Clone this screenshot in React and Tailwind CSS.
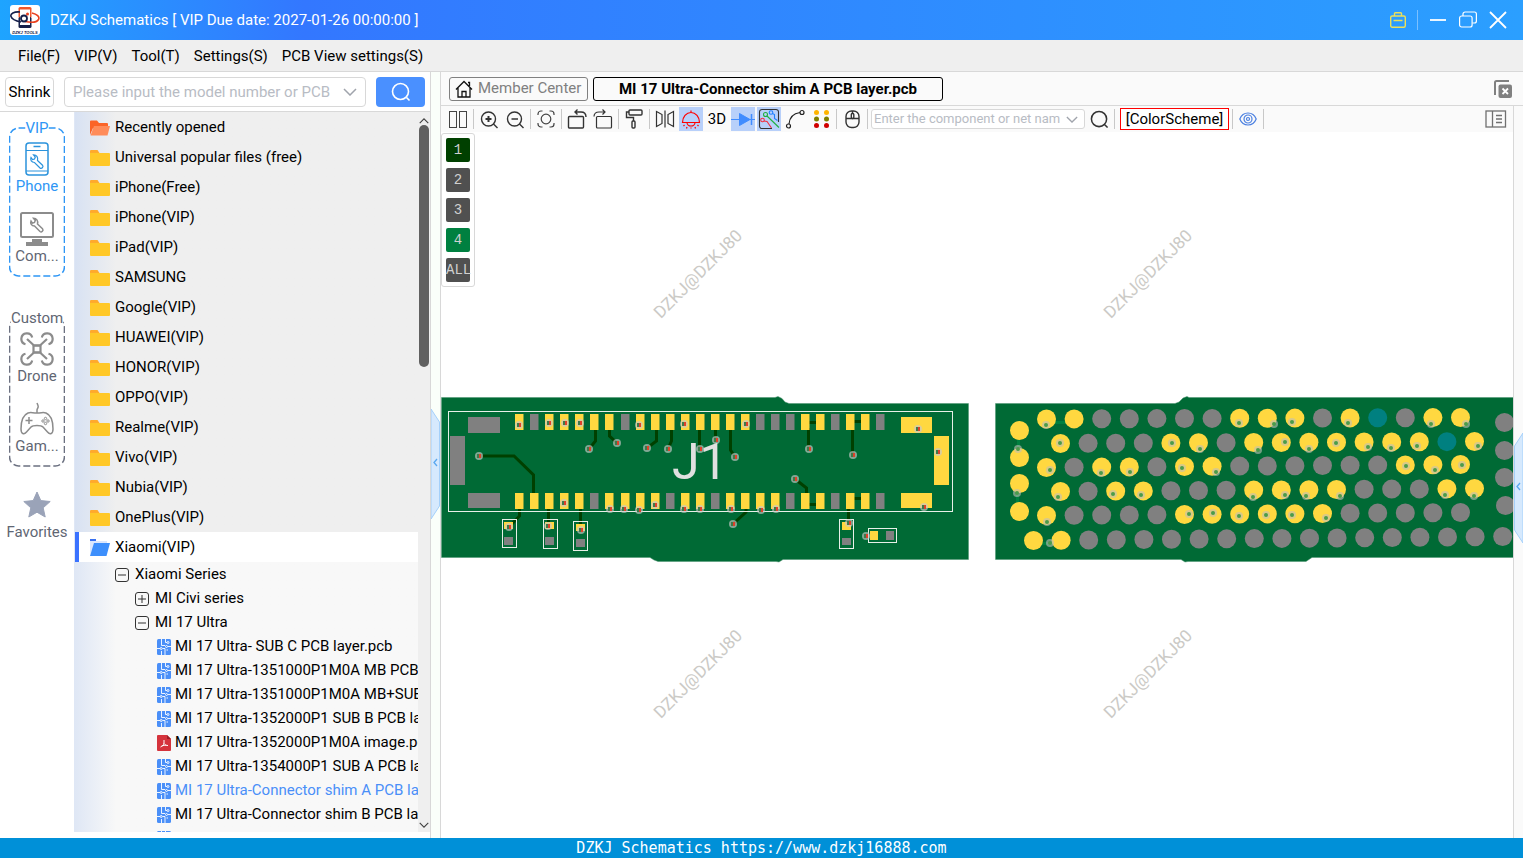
const menus = ['File(F)', 'VIP(V)', 'Tool(T)', 'Settings(S)', 'PCB View settings(S)']

const folders = [
  'Universal popular files (free)',
  'iPhone(Free)',
  'iPhone(VIP)',
  'iPad(VIP)',
  'SAMSUNG',
  'Google(VIP)',
  'HUAWEI(VIP)',
  'HONOR(VIP)',
  'OPPO(VIP)',
  'Realme(VIP)',
  'Vivo(VIP)',
  'Nubia(VIP)',
  'OnePlus(VIP)',
]

const files = [
  { name: 'MI 17 Ultra- SUB C PCB layer.pcb' },
  { name: 'MI 17 Ultra-1351000P1M0A MB PCB layer.pcb' },
  { name: 'MI 17 Ultra-1351000P1M0A MB+SUB PCB layer.pcb' },
  { name: 'MI 17 Ultra-1352000P1 SUB B PCB layer.pcb' },
  { name: 'MI 17 Ultra-1352000P1M0A image.pdf', pdf: true },
  { name: 'MI 17 Ultra-1354000P1 SUB A PCB layer.pcb' },
  { name: 'MI 17 Ultra-Connector shim A PCB layer.pcb', active: true },
  { name: 'MI 17 Ultra-Connector shim B PCB layer.pcb' },
  { name: 'MI 17 Ultra-Connector shim C PCB layer.pcb' },
]

const layers = [
  { label: '1', color: 'bg-[#004000]' },
  { label: '2', color: 'bg-[#505050]' },
  { label: '3', color: 'bg-[#505050]' },
  { label: '4', color: 'bg-[#008040]' },
  { label: 'ALL', color: 'bg-[#505050]' },
]

const YELLOW = '#ffd840'
const GREY = '#808080'
const TEAL = '#008080'
const BOARD = '#006a35'
const fills = { Y: YELLOW, G: GREY, T: TEAL }

/* ---------- board A: the connector ---------- */

const pinX = [75, 90, 105, 120, 135, 150, 165, 181, 196, 211, 226, 241, 256, 271, 286, 301, 316, 331, 346, 361, 376, 391, 406, 421, 436]
const topPins = 'YGYYYYYGYYYYYYYYGGGYYGYYG'
const bottomPins = 'YYYYYGYYYYGYYGYYYYGYYGYYG'

// x, y, width, height, colour
const pads = [
  [28, 27, 32, 16, 'G'], [10, 46, 15, 49, 'G'], [28, 103, 32, 15, 'G'],
  [461, 27, 31, 16, 'Y'], [494, 46, 15, 49, 'Y'], [461, 103, 31, 15, 'Y'],
  [64, 132, 9, 7, 'Y'], [64, 147, 9, 8, 'G'],
  [105, 132, 9, 7, 'Y'], [105, 147, 9, 8, 'G'],
  [136, 134, 9, 7, 'Y'], [136, 149, 9, 8, 'G'],
  [402, 132, 9, 8, 'Y'], [402, 148, 9, 7, 'G'],
  [430, 141, 8, 9, 'Y'], [446, 141, 8, 9, 'G'],
]

const outlines = [
  [8.5, 21.5, 504, 100], [62.5, 129.5, 14, 28], [103.5, 129.5, 14, 29],
  [133.5, 131.5, 14, 29], [399.5, 129.5, 14, 29], [428.5, 138.5, 28, 14],
]

const traces = [
  '39,66 74,66 93.5,85 93.5,105', '155.5,38 155.5,51 149,59', '169.5,38 169.5,46 177,53',
  '216.5,38 216.5,51 207,58', '231.5,38 231.5,51 228,59', '259.5,38 259.5,59', '275.5,38 275.5,50',
  '290.5,38 290.5,60 295,67', '368.5,38 368.5,59', '367,32.5 380,32.5', '412.5,38 412.5,65',
  '412,31.5 424,31.5', '355,89 366.5,98 366.5,105', '367,114.5 380,114.5', '412,108.5 424,108.5',
  '79.5,117 79.5,126 69,137', '108.5,117 108.5,136', '140.5,117 140.5,140', '306,117 306,122 293,134',
  '408.5,117 408.5,133',
]

const viasA = [
  [79, 35], [109, 33], [125, 33], [140, 33], [149, 59], [177, 53], [199, 35], [207, 58], [228, 59],
  [244, 34], [260, 59], [276, 50], [39, 66], [124, 113], [170, 119], [184, 119], [199, 120], [215, 115],
  [244, 119], [260, 119], [69, 137], [108, 136], [141, 140], [306, 34], [295, 67], [369, 59], [413, 65],
  [355, 89], [291, 119], [321, 120], [336, 119], [293, 134], [478, 39], [498, 62], [484, 117], [409, 133],
  [426, 146],
]

/* ---------- board B: the ball grid ---------- */

// first x, y at the left end, y at the right end, colours
const ballRows = [
  { x: 66.5, y1: 29, y2: 27.5, balls: 'YYGGGGGYYYGYTGYY' },
  { x: 80.5, y1: 53.5, y2: 51.5, balls: 'YGGGYYGYYYYYYYTY' },
  { x: 66.5, y1: 77.5, y2: 74.5, balls: 'YGYYGYYGGGGGGYYY' },
  { x: 80.5, y1: 101.5, y2: 98.5, balls: 'YGYYGGGYYYYGGGYY' },
  { x: 66.5, y1: 125.5, y2: 122.5, balls: 'YGGGGYYYYYYGGGGG' },
  { x: 53.5, y1: 150.5, y2: 146.5, balls: 'YYGGGGGGGGGGGGGGGG' },
]

const sideBalls = [
  [39.5, 40.5, 'Y'], [39.5, 67.5, 'Y'], [39.5, 93.5, 'Y'], [39.5, 121.5, 'Y'],
  [524.5, 32.5, 'G'], [524.5, 60.5, 'G'], [524.5, 87.5, 'G'], [525.5, 115.5, 'G'],
]

const viasB = [
  [66, 35], [80, 53], [38, 59], [70, 80], [121, 83], [150, 82], [192, 53], [220, 59], [202, 78], [236, 82],
  [259, 33], [278, 60], [37, 103], [78, 107], [133, 104], [161, 105], [273, 107], [67, 132], [209, 124],
  [233, 123], [259, 126], [70, 153], [294, 34], [312, 32], [368, 33], [451, 34], [486, 34], [305, 52],
  [329, 59], [356, 53], [388, 57], [411, 58], [437, 56], [498, 56], [426, 76], [455, 80], [482, 75],
  [305, 105], [326, 106], [360, 106], [465, 105], [494, 106], [286, 125], [312, 125], [346, 128],
]

function ViaA({ x, y }) {
  return (
    <g transform={`translate(${x} ${y})`}>
      <circle r="4" fill="#c8c8c8" fillOpacity="0.65" />
      <rect x="-2" y="-2" width="2" height="4" fill="#3f7a4a" />
      <rect x="0" y="-2" width="2" height="4" fill="#e0402a" />
    </g>
  )
}

function ViaB({ x, y }) {
  return (
    <g>
      <circle cx={x} cy={y} r="4" fill="#c0c0b8" fillOpacity="0.6" />
      <circle cx={x} cy={y} r="2" fill="#4b9b4b" />
    </g>
  )
}

function Boards() {
  return (
    <svg className="block w-full h-full" role="img" aria-label="PCB layer view">
      <g fill="#cbcac6" fontFamily="Roboto, sans-serif" fontSize="17" textAnchor="middle">
        <text transform="translate(261 146) rotate(-45)">DZKJ@DZKJ80</text>
        <text transform="translate(711 146) rotate(-45)">DZKJ@DZKJ80</text>
        <text transform="translate(261 546) rotate(-45)">DZKJ@DZKJ80</text>
        <text transform="translate(711 546) rotate(-45)">DZKJ@DZKJ80</text>
      </g>

      <g transform="translate(-1 258)">
        <path
          d="M1.500 7.500H335L338 6.500L342 8.500L345 12L349 13.500H528.500V169.500H343L339 172L336 171.500H218L214 170L210 167.500H1.500Z"
          fill={BOARD}
          stroke="#4c9570"
          strokeWidth="0.5"
        />
        {traces.map((t) => (
          <polyline key={t} points={t} fill="none" stroke="#004000" strokeWidth="3" />
        ))}
        {pinX.map((x, i) => (
          <g key={x}>
            <rect x={x} y="24" width="8.500" height="16" fill={fills[topPins[i]]} />
            <rect x={x} y="103" width="8.500" height="16" fill={fills[bottomPins[i]]} />
          </g>
        ))}
        {pads.map(([x, y, w, h, c]) => (
          <rect key={`${x}-${y}`} x={x} y={y} width={w} height={h} fill={fills[c]} />
        ))}
        {outlines.map(([x, y, w, h]) => (
          <rect key={`${x}-${y}`} x={x} y={y} width={w} height={h} fill="none" stroke="#e8f0e8" />
        ))}
        {viasA.map(([x, y]) => (
          <ViaA key={`${x}-${y}`} x={x} y={y} />
        ))}
        <text x="232" y="89" fontSize="50" fontFamily="Roboto, sans-serif" fill="#e0e0e0">
          J1
        </text>
      </g>

      <g transform="translate(539 258)">
        <path
          d="M15.5 13.500H195L199 12L203 8L207 6.500L209 7.500H560V167.500H332L326 171.500H208L205 172L201 169.500H15.500Z"
          fill={BOARD}
          stroke="#4c9570"
          strokeWidth="0.5"
        />
        <path d="M66 32.500H94M38.500 48V60M37.500 103V116M54 153.500H75" stroke="#008040" strokeWidth="3" />
        {ballRows.map((row) =>
          [...row.balls].map((b, i) => (
            <circle
              key={`${row.y1}-${i}`}
              cx={row.x + i * 27.6}
              cy={row.y1 + ((row.y2 - row.y1) * i) / (row.balls.length - 1)}
              r="9.500"
              fill={fills[b]}
            />
          ))
        )}
        {sideBalls.map(([x, y, c]) => (
          <circle key={`${x}-${y}`} cx={x} cy={y} r="9.500" fill={fills[c]} />
        ))}
        {viasB.map(([x, y]) => (
          <ViaB key={`${x}-${y}`} x={x} y={y} />
        ))}
      </g>
    </svg>
  )
}

/* ---------- icons ---------- */

function Logo() {
  return (
    <svg viewBox="0 0 30 30" className="w-[30px] h-[30px] shrink-0">
      <rect width="30" height="30" rx="3" fill="#fff" />
      <rect x="8.500" y="2" width="13" height="11" rx="1.500" fill="#f0562c" />
      <rect x="8.500" y="12" width="13" height="11" rx="1.500" fill="#16204a" />
      <rect x="10" y="4.500" width="10" height="15.500" fill="#fff" />
      <path d="M22 8c5 1 8 4 6.500 6.500S22 18 15 16.500" fill="none" stroke="#e8401f" strokeWidth="1.600" />
      <path d="M10 7C4 6.500 0 8.500 1 11.500c.8 2.500 5 4.500 10 5.500" fill="none" stroke="#16204a" strokeWidth="1.600" />
      <circle cx="14" cy="13.500" r="3" fill="none" stroke="#16204a" strokeWidth="1.800" />
      <circle cx="17.500" cy="9" r="1.500" fill="#e8401f" />
      <text x="15" y="28.500" fontSize="4" fontWeight="700" fontStyle="italic" textAnchor="middle" fontFamily="'Liberation Sans', sans-serif" fill="#16204a">
        DZKJ TOOLS
      </text>
    </svg>
  )
}

function Folder({ open }) {
  if (open === 'orange') {
    return (
      <svg viewBox="0 0 20 16" className="w-5 h-4 shrink-0">
        <path d="M0 15V1.500A1 1 0 0 1 1 .5h6l2 2.500h8a1 1 0 0 1 1 1V8H3Z" fill="#fb6428" />
        <path d="M4 6h16l-2.500 9.500H.5Z" fill="#ff8c5a" />
      </svg>
    )
  }
  if (open === 'blue') {
    return (
      <svg viewBox="0 0 20 17" className="w-5 h-[17px] shrink-0">
        <path d="M0 0h6v2H0Z" fill="#3870f0" />
        <path d="M0 16V2h17v4L4 8Z" fill="#dbe7fd" />
        <path d="M4 4h16l-3.500 13H0Z" fill="#3d8ffc" />
      </svg>
    )
  }
  return (
    <svg viewBox="0 0 20 16" className="w-5 h-4 shrink-0">
      <path d="M0 6V1a1 1 0 0 1 1-1h6.500l2 3v3Z" fill="#ffaa2c" />
      <path d="M0 3h19a1 1 0 0 1 1 1v11a1 1 0 0 1-1 1H1a1 1 0 0 1-1-1Z" fill="#ffc828" />
    </svg>
  )
}

function Toggle({ plus }) {
  return (
    <svg viewBox="0 0 14 14" className="w-3.5 h-3.5 shrink-0" fill="none" stroke="#333">
      <rect x="0.500" y="0.500" width="13" height="13" rx="2.500" />
      <path d={plus ? 'M3 7h8M7 3v8' : 'M3 7h8'} />
    </svg>
  )
}

function PcbFile() {
  return (
    <svg viewBox="0 0 14 16" className="w-3.5 h-4 shrink-0">
      <rect width="14" height="16" rx="1.500" fill="#4a8ff8" />
      <g fill="none" stroke="#fff" strokeWidth="0.900">
        <path d="M4.500 0v6.500h3.500M8.500 0v3.500h1.500M0 9.500h3M5.500 9.500H8V16M4.500 12v4M14 7.500h-3M9.500 11H11" />
        <circle cx="11" cy="3.500" r="1" />
        <circle cx="4.200" cy="9.500" r="1" />
        <circle cx="9.500" cy="7.500" r="1" />
      </g>
    </svg>
  )
}

function PdfFile() {
  return (
    <svg viewBox="0 0 14 16" className="w-3.5 h-4 shrink-0">
      <path d="M1 0h9l4 4v11a1 1 0 0 1-1 1H1a1 1 0 0 1-1-1V1a1 1 0 0 1 1-1Z" fill="#d5333c" />
      <path d="M10 0l4 4h-4Z" fill="#9c1d26" />
      <path d="M7 5v3c0 2-2 3.500-3.500 4M7 8.500c1 1.500 2.500 2 4 2M4.500 11c2-.8 3.500-.8 5-.5" fill="none" stroke="#fff" />
    </svg>
  )
}

function Magnifier({ className }) {
  return (
    <svg viewBox="0 0 20 20" className={className} fill="none" stroke="currentColor" strokeWidth="1.600">
      <circle cx="9.500" cy="9.500" r="8" />
      <path d="M15.500 15.500l3 3" />
    </svg>
  )
}

function Chevron({ className, d = 'M1 1l6 6 6-6' }) {
  return (
    <svg viewBox="0 0 14 8" className={className} fill="none" stroke="currentColor" strokeWidth="1.500">
      <path d={d} />
    </svg>
  )
}

const wrench =
  'M1.500 3.500C.5 6 2 8.500 5 8.500L10.500 14c1.500 1.200 4-.8 2.500-2.800L8 6.500C8.800 3 7 .8 4 .8L5.800 3 5 5l-2 .6Z'

function PhoneIcon() {
  return (
    <svg viewBox="0 0 24 34" className="w-6 h-[34px]" fill="none" stroke="#2b93dc" strokeWidth="1.500">
      <rect x="1" y="1" width="22" height="32" rx="3" />
      <path d="M8.500 4.500h7" />
      <path d="M1 8.500h22M1 29h22" strokeWidth="1" />
      <path d={wrench} transform="translate(4.500 12)" strokeWidth="1.200" />
    </svg>
  )
}

function ComputerIcon() {
  return (
    <svg viewBox="0 0 34 34" className="w-[34px] h-[34px]" fill="none" stroke="#8c8c8c">
      <rect x="1" y="1" width="32" height="24" rx="1.500" strokeWidth="2" />
      <path d="M12 27h10v3h6v4H6v-4h6Z" fill="#8c8c8c" stroke="none" />
      <path d={wrench} transform="translate(9.500 5.500)" strokeWidth="1.500" />
    </svg>
  )
}

function DroneIcon() {
  return (
    <svg viewBox="0 0 34 34" className="w-[34px] h-[34px]" fill="none" stroke="#8c8c8c" strokeWidth="2.200">
      <path d="M5.500 12.200A5.500 5.500 0 1 1 12.200 5.500M21.800 5.500A5.500 5.500 0 1 1 28.500 12.200M5.500 21.800A5.500 5.500 0 1 0 12.200 28.500M21.800 28.500A5.500 5.500 0 1 0 28.500 21.800" />
      <path d="M7 7l7 6.500h6L27 7M7 27l7-6.500h6L27 27" />
      <rect x="13.500" y="13.500" width="7" height="7" />
    </svg>
  )
}

function GamepadIcon() {
  return (
    <svg viewBox="0 0 34 34" className="w-[34px] h-[34px]" fill="none" stroke="#8c8c8c" strokeWidth="1.500">
      <path d="M17 11V8c0-2 2-2 1-4.500L17 1" />
      <path d="M8 11c3-1 4 0 9 0s6-1 9 0c5 2 7 9 7 16 0 5-3 6-5.500 3L23 25c-1-1-2-1.500-6-1.500S12 24 11 25l-4.500 5C4 33 1 32 1 27c0-7 2-14 7-16Z" />
      <path d="M5.500 18.500h7M9 15v7" />
      <g strokeWidth="1">
        <circle cx="25.500" cy="16.500" r="1.200" />
        <circle cx="25.500" cy="21.500" r="1.200" />
        <circle cx="23" cy="19" r="1.200" />
        <circle cx="28" cy="19" r="1.200" />
      </g>
    </svg>
  )
}

const toolSvg = 'w-6 h-6'

const toolIcons = {
  split: (
    <svg viewBox="0 0 24 24" className={toolSvg} fill="none" stroke="#444">
      <rect x="3.500" y="4.500" width="7" height="16" />
      <rect x="13.500" y="4.500" width="7" height="16" />
    </svg>
  ),
  zoomIn: (
    <svg viewBox="0 0 24 24" className={toolSvg} fill="none" stroke="#333" strokeWidth="1.400">
      <circle cx="11.500" cy="12" r="7" />
      <path d="M16.500 17l4 4" />
      <path d="M8.500 12h6M11.500 9v6" strokeWidth="2" />
    </svg>
  ),
  zoomOut: (
    <svg viewBox="0 0 24 24" className={toolSvg} fill="none" stroke="#333" strokeWidth="1.400">
      <circle cx="11.500" cy="12" r="7" />
      <path d="M16.500 17l4 4M8.500 12H15" />
    </svg>
  ),
  fit: (
    <svg viewBox="0 0 24 24" className={toolSvg} fill="none" stroke="#444" strokeWidth="1.200">
      <circle cx="12" cy="12" r="4.800" />
      <path d="M4 8V7a3 3 0 0 1 3-3h1.500M15.500 4H17a3 3 0 0 1 3 3v1M20 16v1a3 3 0 0 1-3 3h-1.500M8.500 20H7a3 3 0 0 1-3-3v-1" />
    </svg>
  ),
  rotateLeft: (
    <svg viewBox="0 0 24 24" className={toolSvg} fill="none" stroke="#333" strokeWidth="1.400">
      <rect x="3.500" y="9.500" width="15" height="11.500" rx="1" />
      <path d="M21 10c0-3-2-5-5-5H10M12.500 2.500L10 5l2.500 2.500" />
    </svg>
  ),
  rotateRight: (
    <svg viewBox="0 0 24 24" className={toolSvg} fill="none" stroke="#333" strokeWidth="1.200">
      <rect x="5.500" y="9.500" width="15" height="11.500" rx="1" />
      <path d="M3 9.500C3 6.500 5 5 8 5h6M11.500 2.500L14 5l-2.500 2.500" />
    </svg>
  ),
  roller: (
    <svg viewBox="0 0 24 24" className={toolSvg} fill="none" stroke="#333" strokeWidth="1.400">
      <rect x="7" y="3" width="13" height="5" rx="1" />
      <path d="M7 5H4.500v5.500h7V14" />
      <rect x="10" y="14" width="3" height="7" rx="1" />
    </svg>
  ),
  mirror: (
    <svg viewBox="0 0 24 24" className={toolSvg} fill="none" stroke="#333" strokeWidth="1.200">
      <path d="M3.500 4.500L9 7.500v9l-5.500 3ZM12 3.500v17M20.500 4.500L15 7.500v9l5.500 3Z" />
    </svg>
  ),
  lamp: (
    <svg viewBox="0 0 24 24" className={toolSvg} fill="none" stroke="#f00" strokeWidth="1.200">
      <path d="M12 3.500v1.500M3.500 15.500a8.500 10 0 0 1 17 0ZM8 15.500a4 3.500 0 0 0 8 0M5.500 18l-1 1M8 20l-.5 1.500M12 20.500v1M16 20l.5 1.500M18.500 18l1 1" />
    </svg>
  ),
  diode: (
    <svg viewBox="0 0 24 24" className={toolSvg} stroke="#408cff" fill="#408cff">
      <path d="M0 12.500h24" />
      <path d="M8.500 6.500v12l10.500-6Z" />
      <path d="M20.500 7v11" strokeWidth="1.500" />
    </svg>
  ),
  nets: (
    <svg viewBox="0 0 24 24" className={toolSvg} fill="none" strokeWidth="1.100">
      <path d="M15 21.500H5A2.500 2.500 0 0 1 2.500 19V5A2.500 2.500 0 0 1 5 2.500h14A2.500 2.500 0 0 1 21.500 5v10" stroke="#333" />
      <circle cx="8.500" cy="7.500" r="2" stroke="#20b040" />
      <path d="M10 9l12 11.500" stroke="#20b040" />
      <circle cx="14" cy="5.500" r="1.800" stroke="#2080ff" />
      <path d="M15.500 6.500l2 1v4l3 2" stroke="#2080ff" />
      <circle cx="5.500" cy="13" r="1.800" stroke="#f03040" />
      <path d="M7 14l3 .5 4.500 6.500" stroke="#f03040" />
    </svg>
  ),
  arc: (
    <svg viewBox="0 0 24 24" className={toolSvg} fill="none" stroke="#222" strokeWidth="1.200">
      <circle cx="5.500" cy="19" r="2" />
      <circle cx="19" cy="5.500" r="2" />
      <path d="M6 17C6.500 11 9.500 6.500 17 5.500" />
    </svg>
  ),
  dots: (
    <svg viewBox="0 0 24 24" className={toolSvg}>
      <g fill="#ffb400"><circle cx="7.500" cy="5.500" r="2.500" /><circle cx="17.500" cy="5.500" r="2.500" /></g>
      <g fill="#808000"><circle cx="7.500" cy="12" r="2.500" /><circle cx="17.500" cy="12" r="2.500" /></g>
      <g fill="#d00000"><circle cx="7.500" cy="18.500" r="2.500" /><circle cx="17.500" cy="18.500" r="2.500" /></g>
    </svg>
  ),
  mouse: (
    <svg viewBox="0 0 24 24" className={toolSvg} fill="none" stroke="#333" strokeWidth="1.400">
      <rect x="6" y="4" width="13" height="16.500" rx="5.500" />
      <path d="M6 11.500h13M12.500 4v3" />
      <rect x="11.300" y="6.500" width="2.500" height="5" rx="1" />
    </svg>
  ),
}

const tools = [
  ['split', 'Split view'], ['|'], ['zoomIn', 'Zoom in'], ['zoomOut', 'Zoom out'], ['|'], ['fit', 'Fit'], ['|'],
  ['rotateLeft', 'Rotate left'], ['rotateRight', 'Rotate right'], ['|'], ['roller', 'Paint'], ['|'],
  ['mirror', 'Mirror'], ['lamp', 'Light', true], ['3D', '3D'], ['diode', 'Diode', true], ['nets', 'Nets', true],
  ['arc', 'Measure'], ['dots', 'Points'], ['|'], ['mouse', 'Mouse'], ['|'],
]

function Separator() {
  return <span className="w-px h-5 mx-px shrink-0 bg-[#c8c8c8]" />
}

/* ---------- layout ---------- */

function TitleBar() {
  return (
    <header className="h-10 shrink-0 flex items-center pl-2.5 pr-4 text-white bg-linear-to-r from-[#1ea4ff] via-[#3377ff] via-20% to-[#2b9fff]">
      <Logo />
      <h1 className="ml-2.5">DZKJ Schematics [ VIP Due date: 2027-01-26 00:00:00 ]</h1>
      <div className="ml-auto flex items-center">
        <button aria-label="Toolbox">
          <svg viewBox="0 0 16 16" className="w-4 h-4" fill="none" stroke="#ece05a" strokeWidth="1.400">
            <rect x="0.700" y="4" width="14.600" height="11.300" rx="1.500" />
            <path d="M4.500 4V1.500A.8.800 0 0 1 5.300.7h5.400a.8.800 0 0 1 .8.800V4M3.500 8.500h9" />
          </svg>
        </button>
        <span className="w-px h-5 ml-[11px] mr-[11px] bg-[#7cc0ff]" />
        <button aria-label="Minimize">
          <svg viewBox="0 0 18 18" className="w-[18px] h-[18px]" stroke="#fff" strokeWidth="1.800"><path d="M1 9h16" /></svg>
        </button>
        <button aria-label="Restore" className="ml-3">
          <svg viewBox="0 0 18 18" className="w-[18px] h-[18px]" fill="none" stroke="#fff" strokeWidth="1.200">
            <rect x="0.600" y="5" width="12.500" height="11" rx="2" />
            <path d="M4 5V3a2 2 0 0 1 2-2h9.400a2 2 0 0 1 2 2v7a2 2 0 0 1-2 2h-2" />
          </svg>
        </button>
        <button aria-label="Close" className="ml-3">
          <svg viewBox="0 0 18 18" className="w-[18px] h-[18px]" stroke="#fff" strokeWidth="1.800"><path d="M1 1l16 16M17 1L1 17" /></svg>
        </button>
      </div>
    </header>
  )
}

function NavGroup({ label, color, text, children }) {
  return (
    <section className="relative w-14 h-[150px] pt-3.5">
      <svg className="absolute inset-0 w-full h-full pointer-events-none">
        <rect x="1%" y="0.700%" width="98%" height="98.600%" rx="9" fill="none" stroke={color} strokeWidth="1.500" strokeDasharray="7 3" />
      </svg>
      <h2 className={`absolute -top-2 left-1/2 -translate-x-1/2 bg-white leading-[18px] ${text}`}>{label}</h2>
      {children}
    </section>
  )
}

function NavItem({ icon, label, text = 'text-[#5f6673]' }) {
  return (
    <button className={`relative w-full h-[70px] flex flex-col items-center leading-[18px] ${text}`}>
      <span className="h-9 flex items-center">{icon}</span>
      {label}
    </button>
  )
}

function SideNav() {
  return (
    <nav className="w-[74px] shrink-0 flex flex-col items-center pt-[15px] bg-white">
      <NavGroup label="VIP" color="#2e96f5" text="text-[#2e96f5]">
        <NavItem icon={<PhoneIcon />} label="Phone" text="text-[#2e96f5]" />
        <NavItem icon={<ComputerIcon />} label="Com..." />
      </NavGroup>
      <div className="h-10 shrink-0" />
      <NavGroup label="Custom" color="#6b7080" text="text-[#5f6673]">
        <NavItem icon={<DroneIcon />} label="Drone" />
        <NavItem icon={<GamepadIcon />} label="Gam..." />
      </NavGroup>
      <div className="h-5 shrink-0" />
      <NavItem
        icon={
          <svg viewBox="0 0 28 28" className="w-7 h-7" fill="#9aa3b8">
            <path d="M14 1l3.800 8.600 9.400.9-7 6.300 2 9.200-8.200-4.800L5.800 26l2-9.200-7-6.300 9.400-.9Z" stroke="#9aa3b8" strokeLinejoin="round" />
          </svg>
        }
        label="Favorites"
      />
    </nav>
  )
}

function Tree() {
  return (
    <div className="flex-1 min-w-0 min-h-0 flex flex-col overflow-hidden bg-linear-to-r from-[#d8e2f3] to-[#efefef] to-12%">
      <ul>
        <li className="h-[30px] pt-px pl-[15px] flex items-center gap-[5px]"><Folder open="orange" />Recently opened</li>
        {folders.map((f) => (
          <li key={f} className="h-[30px] pt-px pl-[15px] flex items-center gap-[5px]"><Folder />{f}</li>
        ))}
        <li className="h-[30px] pt-px pl-[11px] flex items-center gap-[5px] bg-white border-l-4 border-[#3a72ff]"><Folder open="blue" />Xiaomi(VIP)</li>
      </ul>
      <ul className="bg-linear-to-r from-[#dfe7f5] to-[#f8f8f8] to-12%">
        <li className="h-6 pt-px pl-10 flex items-center gap-1.5"><Toggle />Xiaomi Series</li>
        <li className="h-6 pt-px pl-[60px] flex items-center gap-1.5"><Toggle plus />MI Civi series</li>
        <li className="h-6 pt-px pl-[60px] flex items-center gap-1.5"><Toggle />MI 17 Ultra</li>
        {files.map((f) => (
          <li key={f.name} className={`h-6 pt-px pl-[82px] flex items-center gap-1 whitespace-nowrap ${f.active ? 'text-[#4a8ff8]' : ''}`}>
            {f.pdf ? <PdfFile /> : <PcbFile />}
            {f.name}
          </li>
        ))}
      </ul>
    </div>
  )
}

function Sidebar() {
  return (
    <aside className="w-[431px] shrink-0 flex flex-col bg-white border-r border-[#d8d8d8]">
      <form className="h-10 shrink-0 flex items-center pl-[5px] pr-[5px] border-b border-[#d8d8d8]">
        <button type="button" className="w-[49px] h-[30px] pt-px border border-[#d8d8d8] rounded-sm">Shrink</button>
        <div className="ml-2.5 flex-1 h-[30px] flex items-center px-2 border border-[#d8d8d8] rounded-sm">
          <input
            aria-label="Model number or PCB"
            placeholder="Please input the model number or PCB"
            className="flex-1 min-w-0 pt-px outline-none placeholder:text-[#b8bcc4]"
          />
          <Chevron className="w-3.5 h-2 ml-1.5 text-[#a0a4ac]" />
        </div>
        <button type="button" aria-label="Search" className="ml-2.5 w-[49px] h-[30px] flex items-center justify-center rounded-sm bg-[#4a90ff] text-white">
          <Magnifier className="w-5 h-5" />
        </button>
      </form>
      <div className="flex-1 min-h-0 flex pb-1.5">
        <SideNav />
        <div className="flex-1 min-w-0 flex border-l border-[#dfe7f5]">
          <Tree />
          <div className="w-3 shrink-0 flex flex-col items-center pt-1.5 pb-1 bg-[#efefef]">
            <Chevron className="w-2.5 h-1.5 text-[#404040]" d="M1 7l6-6 6 6" />
            <div className="mt-px w-2.5 h-[242px] rounded-full bg-[#606060]" />
            <Chevron className="w-2.5 h-1.5 mt-auto text-[#404040]" />
          </div>
        </div>
      </div>
    </aside>
  )
}

function TabBar() {
  return (
    <div className="h-[34px] shrink-0 flex items-center gap-[5px] pl-2 pr-[11px] bg-[#fafafa] border-b border-[#d8d8d8]">
      <button className="h-6 w-[139px] flex items-center gap-[5px] pl-[5px] border border-[#808080] rounded-[3px] text-[#808080] whitespace-nowrap">
        <svg viewBox="0 0 18 18" className="w-[18px] h-[18px] shrink-0" fill="none" stroke="#111" strokeWidth="1.300">
          <path d="M1 9.500L9 1.500l8 8M3 8v9h12V8M7 17v-5.500h4V17M13 2.500h1.500V6" />
        </svg>
        Member Center
      </button>
      <button className="h-6 w-[350px] border border-black rounded-[3px] font-bold leading-5 whitespace-nowrap">
        MI 17 Ultra-Connector shim A PCB layer.pcb
      </button>
      <button aria-label="Close all" className="ml-auto">
        <svg viewBox="0 0 18 18" className="w-[18px] h-[18px]">
          <path d="M1 15V2.500A1.500 1.500 0 0 1 2.500 1H15" fill="none" stroke="#808080" strokeWidth="2" />
          <rect x="4.500" y="4.500" width="13.500" height="13.500" rx="2" fill="#808080" />
          <path d="M8.500 8.500l5.500 5.500M14 8.500L8.500 14" stroke="#fff" strokeWidth="1.800" />
        </svg>
      </button>
    </div>
  )
}

function Toolbar() {
  return (
    <div className="h-[26px] shrink-0 flex items-center gap-0.5 pl-[5px] pr-1.5 bg-[#fafafa]">
      {tools.map(([id, title, active], i) =>
        id === '|' ? (
          <Separator key={i} />
        ) : (
          <button key={i} aria-label={title} className={`w-6 h-6 shrink-0 flex items-center justify-center ${active ? 'bg-[#b8d0fa]' : ''}`}>
            {toolIcons[id] || id}
          </button>
        )
      )}
      <div className="w-[214px] h-5 flex items-center px-0.5 border border-[#d8d8d8] rounded-[3px] bg-white">
        <input
          aria-label="Component or net name"
          placeholder="Enter the component or net name"
          className="flex-1 min-w-0 text-[13px] leading-4 outline-none placeholder:text-[#b8bcc4]"
        />
        <Chevron className="w-3 h-[7px] ml-1.5 mr-1 text-[#a0a4ac]" />
      </div>
      <button aria-label="Find" className="w-6 h-6 flex items-center justify-center text-[#333]">
        <Magnifier className="w-[19px] h-[19px]" />
      </button>
      <Separator />
      <button className="ml-0.5 w-[109px] h-[22px] border border-[#f00] leading-5 bg-white">[ColorScheme]</button>
      <Separator />
      <button aria-label="Visibility" className="w-6 h-6 flex items-center justify-center">
        <svg viewBox="0 0 18 14" className="w-[18px] h-3.5" fill="none" stroke="#4a7fe0" strokeWidth="1.200">
          <path d="M.8 7C4-1 14-1 17.200 7 14 15 4 15 .8 7Z" />
          <circle cx="9" cy="7" r="4" />
          <circle cx="9" cy="7" r="1.500" />
        </svg>
      </button>
      <Separator />
      <button aria-label="Panel" className="ml-auto">
        <svg viewBox="0 0 22 18" className="w-[22px] h-[18px]" fill="none" stroke="#707070" strokeWidth="1.300">
          <rect x="1" y="1" width="19.500" height="16" />
          <path d="M7.500 1v16M11 5.500h6M11 9h6M11 12.500h6" />
        </svg>
      </button>
    </div>
  )
}

function Drawer({ side }) {
  return (
    <button aria-label={`Toggle ${side} panel`} className="block w-[9px]">
      <svg viewBox="0 0 9 110" className="w-[9px] h-[110px]">
        {side === 'left' ? (
          <path d="M0 0l8.500 13v84L0 110Z" fill="#d6e9fd" stroke="#a4d0fa" />
        ) : (
          <path d="M9 0L.5 13v84L9 110Z" fill="#d6e9fd" stroke="#a4d0fa" />
        )}
        <path d="M6 50L3 53.500 6 57" fill="none" stroke="#5aa8f0" strokeWidth="1.300" />
      </svg>
    </button>
  )
}

export default function App() {
  return (
    <div className="h-screen flex flex-col overflow-hidden bg-white text-black text-[15px] font-[Roboto,sans-serif]">
      <TitleBar />
      <nav className="h-8 shrink-0 flex items-center gap-3.5 pt-0.5 pl-[18px] bg-[#efefef] border-b border-[#d8d8d8]">
        {menus.map((m) => (
          <button key={m}>{m}</button>
        ))}
      </nav>

      <div className="flex-1 min-h-0 flex">
        <Sidebar />
        <div className="w-2.5 shrink-0 flex items-center pt-[17px] bg-[#fafffa] border-r border-[#d8d8d8]">
          <Drawer side="left" />
        </div>
        <main className="flex-1 min-w-0 flex flex-col">
          <TabBar />
          <div className="flex-1 min-h-0 flex">
            <div className="flex-1 min-w-0 flex flex-col">
              <Toolbar />
              <div className="relative flex-1 min-h-0 overflow-hidden bg-white">
                <Boards />
                <div className="absolute left-0 top-px flex flex-col gap-1.5 p-1 bg-white border border-[#d8d8d8] rounded-[3px]">
                  {layers.map((l) => (
                    <button
                      key={l.label}
                      className={`w-6 h-6 rounded-xs text-sm leading-6 text-[#d0d0d0] font-['Liberation_Mono',monospace] ${l.color}`}
                    >
                      {l.label}
                    </button>
                  ))}
                </div>
              </div>
            </div>
            <div className="w-2.5 shrink-0 flex items-center pt-8 bg-[#fafafa] border-l border-[#d8d8d8]">
              <Drawer side="right" />
            </div>
          </div>
        </main>
      </div>

      <footer className="h-5 shrink-0 text-center leading-5 text-white text-[15px] bg-[#0090d8] font-['DejaVu_Sans_Mono',monospace]">
        DZKJ Schematics https://www.dzkj16888.com
      </footer>
    </div>
  )
}
